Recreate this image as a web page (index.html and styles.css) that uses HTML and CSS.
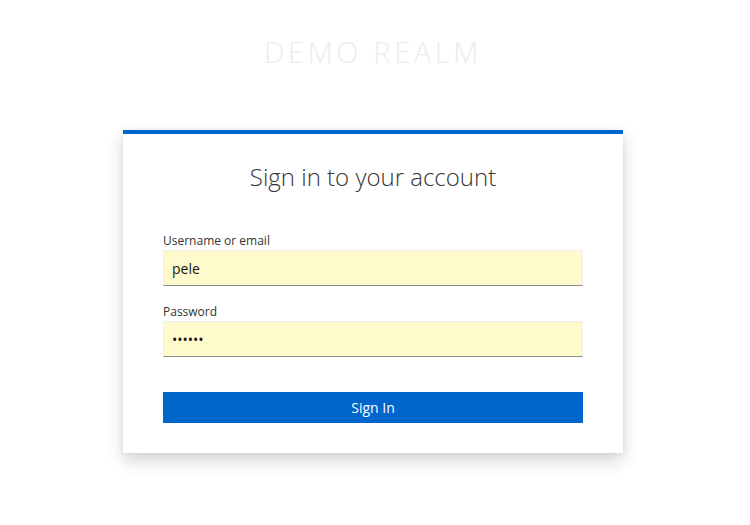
FILE: index.html
```html
<!DOCTYPE html>
<html lang="en">
<head>
<meta charset="utf-8">
<title>Sign in to Demo Realm</title>
<link rel="stylesheet" href="styles.css">
</head>
<body>
<div class="page">
  <header class="realm">DEMO REALM</header>
  <main class="card">
    <h1 class="card-title">Sign in to your account</h1>
    <form class="login-form">
      <div class="field">
        <label class="field-label" for="username">Username or email</label>
        <input class="field-input" id="username" type="text" value="pele">
      </div>
      <div class="field">
        <label class="field-label" for="password">Password</label>
        <input class="field-input" id="password" type="password" value="secret">
      </div>
      <button class="submit" type="button">Sign In</button>
    </form>
  </main>
</div>
</body>
</html>
```

FILE: styles.css
```css
html, body {
  margin: 0;
  padding: 0;
  background: #fff;
}

body {
  font-family: "Open Sans", "Liberation Sans", sans-serif;
  color: #333;
}

.page {
  width: 746px;
  min-height: 525px;
  display: flex;
  flex-direction: column;
  align-items: center;
}

.realm {
  margin-top: 34px;
  height: 96px;
  font-size: 29px;
  font-weight: 300;
  line-height: 36px;
  letter-spacing: 0.125em;
  color: #ececec;
  text-align: center;
}

.card {
  width: 500px;
  box-sizing: border-box;
  border-top: 4px solid #0066cc;
  padding: 28px 40px 30px;
  background: #fff;
  box-shadow: 0 8px 16px 0 rgba(3, 3, 3, 0.16), 0 0 6px 0 rgba(3, 3, 3, 0.07);
}

.card-title {
  margin: 0 0 40px;
  font-size: 24px;
  font-weight: 300;
  line-height: 30px;
  text-align: center;
  color: #363636;
}

.login-form {
  display: flex;
  flex-direction: column;
}

.field {
  display: flex;
  flex-direction: column;
  margin-bottom: 17px;
}

.field + .field {
  margin-bottom: 35px;
}

.field-label {
  font-size: 12px;
  line-height: 16px;
  padding-top: 1px;
  margin-bottom: 1px;
  color: #333;
}

.field-input {
  height: 36px;
  box-sizing: border-box;
  margin: 0;
  padding: 0 8px;
  font-family: "Open Sans", "Liberation Sans", sans-serif;
  font-size: 14px;
  color: #151515;
  background: #fffacc;
  border: 1px solid #f0f0f0;
  border-bottom-color: #8a8d90;
  border-radius: 0;
  outline: none;
}

.submit {
  height: 31px;
  margin: 0;
  border: 0;
  border-radius: 0;
  background: #0066cc;
  color: #fff;
  font-family: "Open Sans", "Liberation Sans", sans-serif;
  font-size: 14px;
  line-height: 31px;
  padding: 0;
}
```
